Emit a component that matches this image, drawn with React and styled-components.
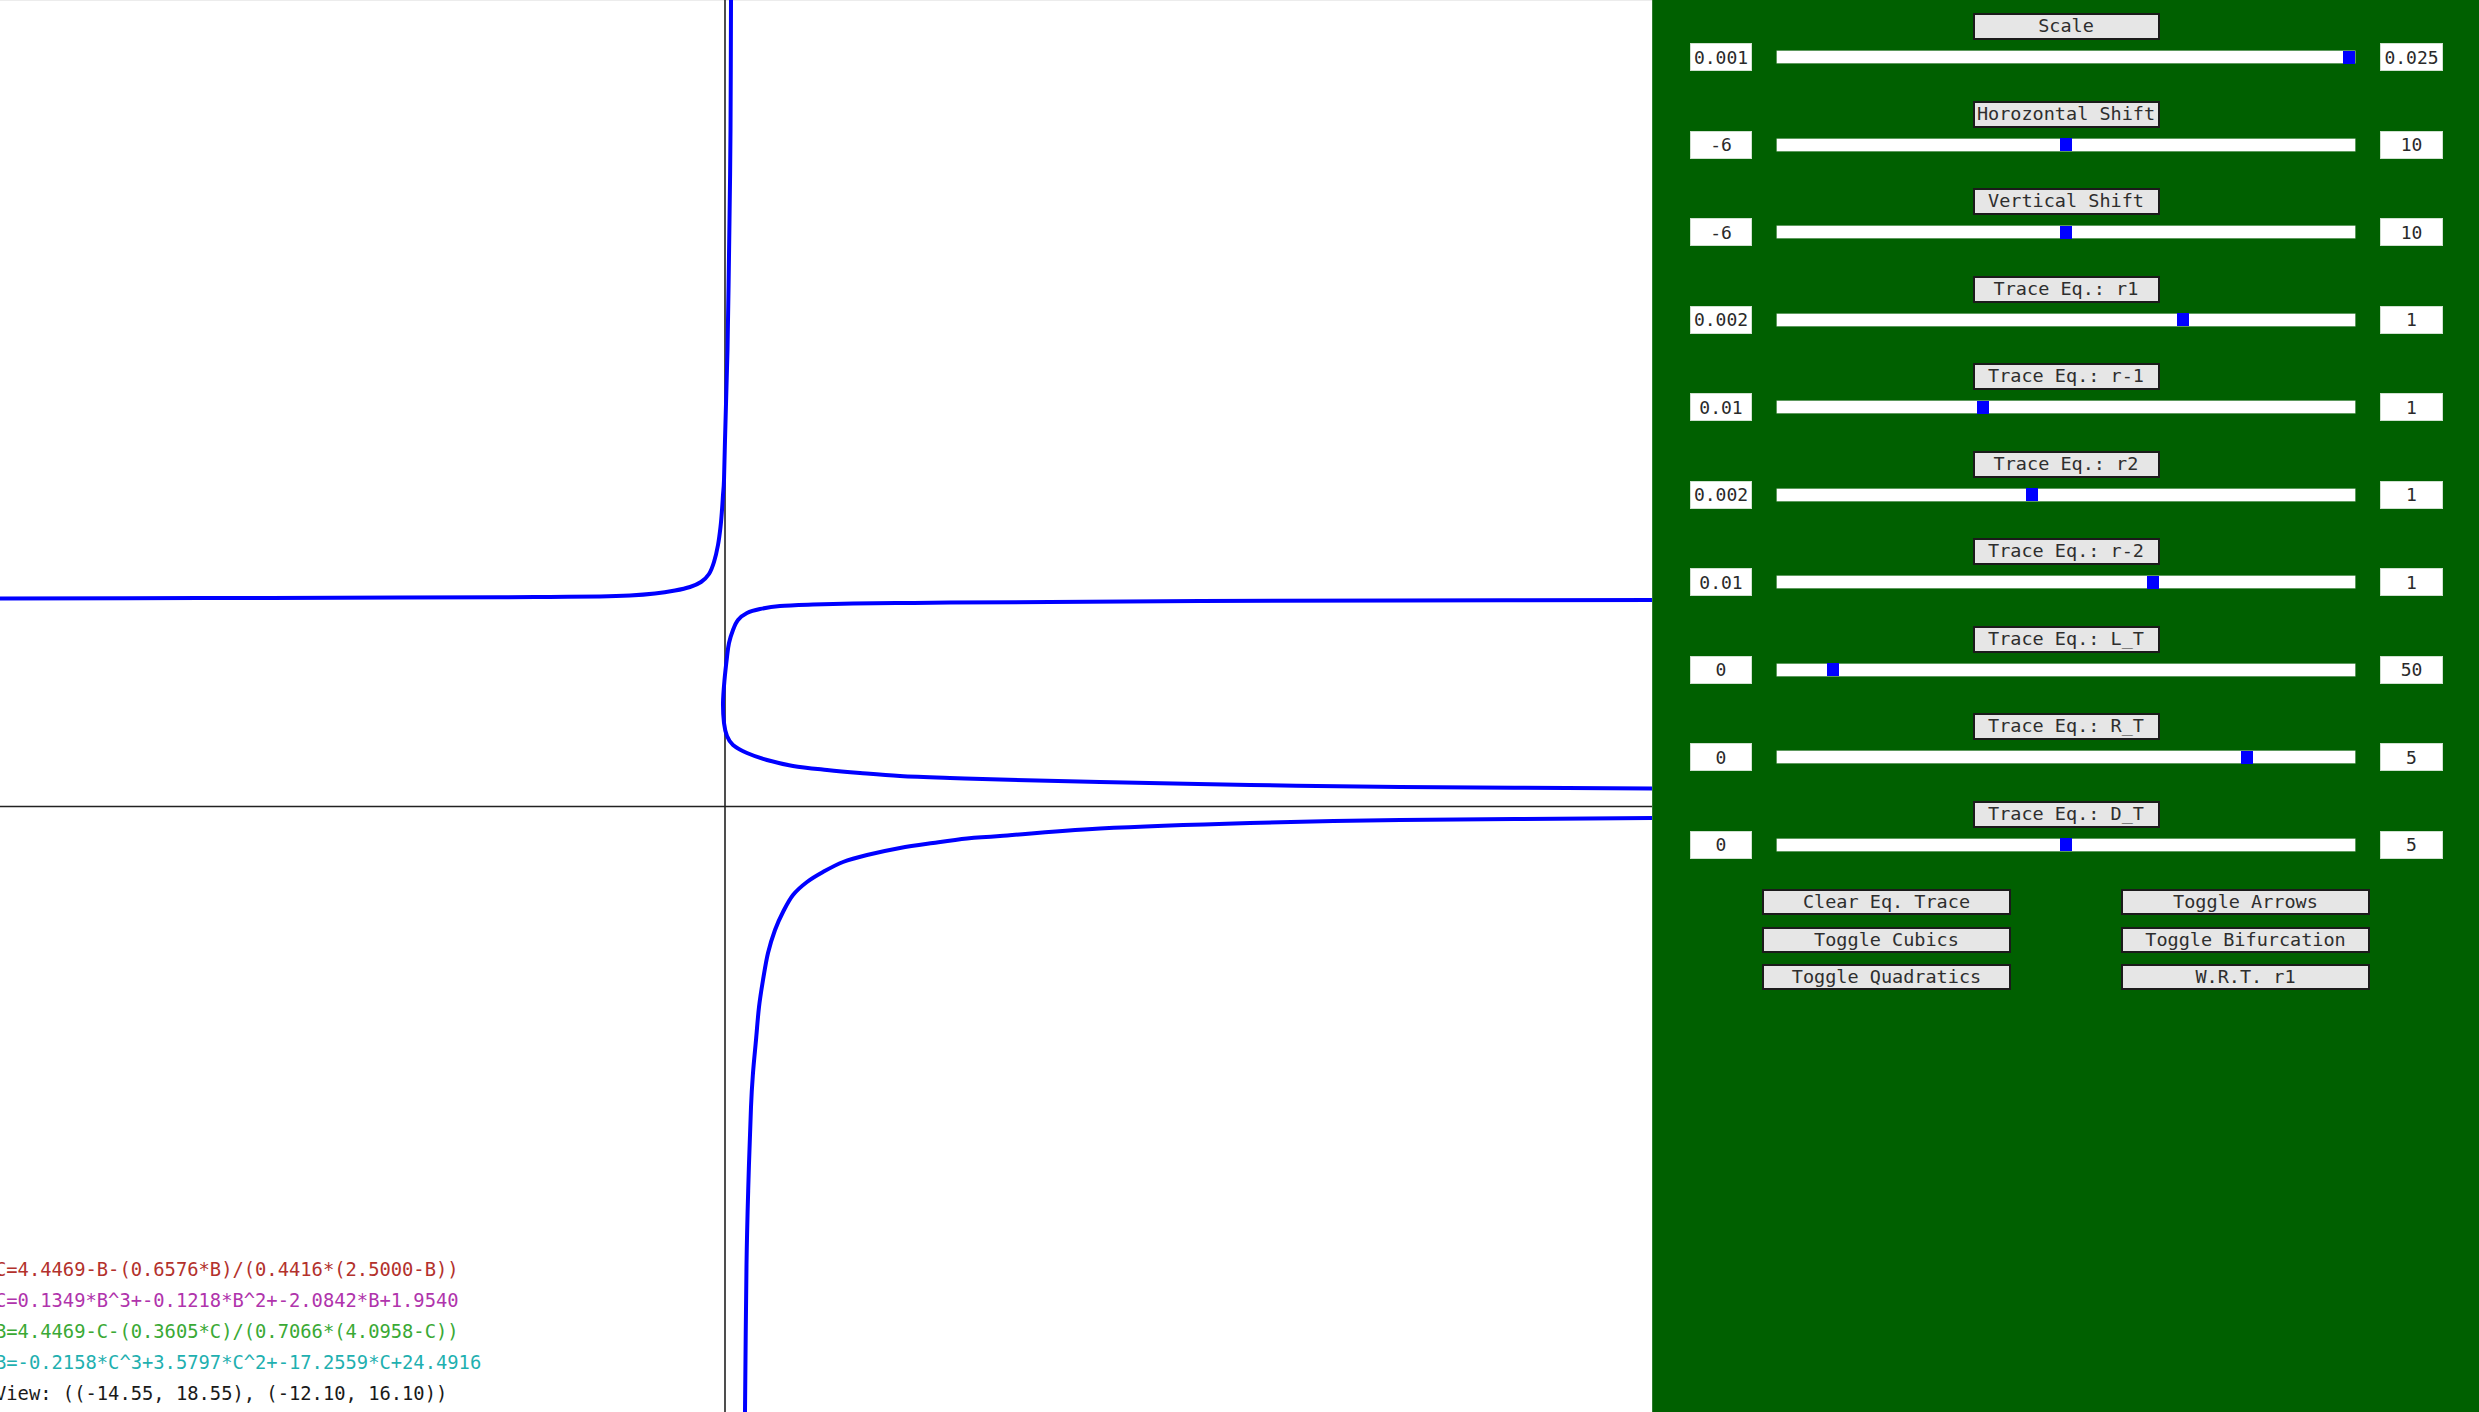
import React from 'react'
import styled, { createGlobalStyle } from 'styled-components'

const GlobalStyle = createGlobalStyle`
  html, body {
    margin: 0;
    padding: 0;
    overflow: hidden;
    background: #fff;
  }
`

const Page = styled.div`
  display: flex;
  width: 100vw;
  height: 100vh;
  overflow: hidden;
  font-family: "DejaVu Sans Mono", "Liberation Mono", monospace;
`

const Graph = styled.div`
  position: relative;
  flex: 0 0 1652px;
  height: 100%;
  background: #fff;
  overflow: hidden;
`

const Plot = styled.svg`
  display: block;
  width: 1652px;
  height: 1412px;
`

const Legend = styled.div`
  position: absolute;
  left: -5px;
  bottom: 3px;
  font-size: 18.8px;
  line-height: 31px;
  white-space: nowrap;
`

const LegendLine = styled.div`
  color: ${p => p.$color};
`

const Panel = styled.div`
  flex: 1;
  display: flex;
  flex-direction: column;
  padding-top: 13px;
  background: #006000;
  border-left: 1px solid #2d7a2d;
  box-sizing: border-box;
`

const SliderGroup = styled.div`
  display: flex;
  flex-direction: column;
  align-items: center;
  gap: 3px;
  margin-bottom: 29.5px;
`

const Label = styled.div`
  width: 187px;
  height: 27px;
  box-sizing: border-box;
  border: 2px solid #1b1b1b;
  background: #e6e6e6;
  color: #2e2e2e;
  font-size: 18.5px;
  line-height: 20px;
  padding-bottom: 1px;
  display: flex;
  align-items: center;
  justify-content: center;
  white-space: nowrap;
`

const SliderRow = styled.div`
  align-self: stretch;
  display: grid;
  grid-template-columns: 62px 1fr 63px;
  column-gap: 25px;
  align-items: center;
  padding: 0 36px 0 37px;
  height: 28px;
`

const ValueBox = styled.div`
  height: 28px;
  box-sizing: border-box;
  background: #fff;
  border: 1px solid #cfe0cf;
  color: #2a2a2a;
  font-size: 18px;
  display: flex;
  align-items: center;
  justify-content: center;
`

const Track = styled.div`
  position: relative;
  height: 12px;
  background: #fff;
  box-shadow: 0 0 0 0.5px #b9d4b9;
`

const Thumb = styled.div`
  position: absolute;
  top: -0.5px;
  width: 12px;
  height: 13px;
  background: #0000ff;
`

const ActionGrid = styled.div`
  display: grid;
  grid-template-columns: repeat(2, 249px);
  column-gap: 110px;
  row-gap: 11.5px;
  justify-content: center;
  margin-top: 1px;
`

const ActionButton = styled.div`
  height: 26px;
  box-sizing: border-box;
  border: 2px solid #1b1b1b;
  background: #e6e6e6;
  color: #2e2e2e;
  font-size: 18.5px;
  line-height: 20px;
  display: flex;
  align-items: center;
  justify-content: center;
  white-space: nowrap;
`

const sliders = [
  { label: 'Scale', min: '0.001', max: '0.025', t: 1 },
  { label: 'Horozontal Shift', min: '-6', max: '10', t: 0.5 },
  { label: 'Vertical Shift', min: '-6', max: '10', t: 0.5 },
  { label: 'Trace Eq.: r1', min: '0.002', max: '1', t: 0.706 },
  { label: 'Trace Eq.: r-1', min: '0.01', max: '1', t: 0.354 },
  { label: 'Trace Eq.: r2', min: '0.002', max: '1', t: 0.4405 },
  { label: 'Trace Eq.: r-2', min: '0.01', max: '1', t: 0.654 },
  { label: 'Trace Eq.: L_T', min: '0', max: '50', t: 0.0889 },
  { label: 'Trace Eq.: R_T', min: '0', max: '5', t: 0.819 },
  { label: 'Trace Eq.: D_T', min: '0', max: '5', t: 0.5 },
]

const actions = [
  'Clear Eq. Trace', 'Toggle Arrows',
  'Toggle Cubics', 'Toggle Bifurcation',
  'Toggle Quadratics', 'W.R.T. r1',
]

const legend = [
  { text: 'C=4.4469-B-(0.6576*B)/(0.4416*(2.5000-B))', color: '#b3312c' },
  { text: 'C=0.1349*B^3+-0.1218*B^2+-2.0842*B+1.9540', color: '#b034ac' },
  { text: 'B=4.4469-C-(0.3605*C)/(0.7066*(4.0958-C))', color: '#3aa935' },
  { text: 'B=-0.2158*C^3+3.5797*C^2+-17.2559*C+24.4916', color: '#1fb0b0' },
  { text: 'View: ((-14.55, 18.55), (-12.10, 16.10))', color: '#1a1a1a' },
]

// traced equilibrium branches, in canvas pixels
const branchA = [
  [731, 0], [730.5, 130], [729.5, 220], [727.5, 350], [725, 440], [724, 480],
  [723, 495], [722, 510], [720.5, 527], [718, 545], [714, 562], [709, 574],
  [701, 582], [690, 587], [675, 590.5], [655, 593.5], [630, 595.5],
  [600, 596.5], [550, 596.9], [500, 597.2], [400, 597.6], [200, 598.1],
  [0, 598.5],
]

const branchB = [
  [1652, 600], [1400, 600.5], [1200, 601], [1050, 602], [950, 602.6],
  [900, 603], [853, 603.5], [813, 604.5], [780, 606], [760, 609], [747, 613],
  [738, 620], [733, 630], [729, 643], [727, 657], [724.5, 680], [723, 703],
  [724, 723], [727, 736], [733, 745], [747, 753], [767, 760], [793, 766],
  [827, 770], [860, 773], [900, 776], [950, 778], [1000, 779.5],
  [1100, 782], [1250, 785], [1400, 787], [1652, 788.5],
]

const branchC = [
  [1652, 818], [1400, 820], [1250, 823], [1100, 828.5], [1000, 836],
  [967, 838.5], [933, 843], [900, 848], [867, 855], [843, 862], [823, 872],
  [807, 882], [793, 895], [783, 912], [775, 930], [768, 953], [763, 980],
  [759, 1007], [756, 1040], [753, 1073], [751, 1107], [748.5, 1180],
  [746.5, 1265], [745, 1412],
]

const smooth = pts => {
  let d = `M${pts[0][0]},${pts[0][1]}`
  for (let i = 0; i < pts.length - 1; i++) {
    const p0 = pts[i - 1] || pts[i]
    const p1 = pts[i]
    const p2 = pts[i + 1]
    const p3 = pts[i + 2] || p2
    const c1x = p1[0] + (p2[0] - p0[0]) / 6
    const c1y = p1[1] + (p2[1] - p0[1]) / 6
    const c2x = p2[0] - (p3[0] - p1[0]) / 6
    const c2y = p2[1] - (p3[1] - p1[1]) / 6
    d += ` C${c1x.toFixed(2)},${c1y.toFixed(2)} ${c2x.toFixed(2)},${c2y.toFixed(2)} ${p2[0]},${p2[1]}`
  }
  return d
}

const Slider = ({ item }) => (
  <SliderGroup>
    <Label>{item.label}</Label>
    <SliderRow>
      <ValueBox>{item.min}</ValueBox>
      <Track>
        <Thumb style={{ left: `calc((100% - 12px) * ${item.t})` }} />
      </Track>
      <ValueBox>{item.max}</ValueBox>
    </SliderRow>
  </SliderGroup>
)

const App = () => {
  return (
    <Page>
      <GlobalStyle />
      <Graph>
        <Plot viewBox="0 0 1652 1412">
          <line x1="0" y1="0.5" x2="1652" y2="0.5" stroke="#ececec" strokeWidth="1" />
          <line x1="725" y1="0" x2="725" y2="1412" stroke="#222" strokeWidth="1.6" />
          <line x1="0" y1="806.5" x2="1652" y2="806.5" stroke="#222" strokeWidth="1.6" />
          {[branchA, branchB, branchC].map((b, i) => (
            <path key={i} d={smooth(b)} fill="none" stroke="#0000ff" strokeWidth="4" strokeLinejoin="round" />
          ))}
        </Plot>
        <Legend>
          {legend.map(l => (
            <LegendLine key={l.text} $color={l.color}>{l.text}</LegendLine>
          ))}
        </Legend>
      </Graph>
      <Panel>
        {sliders.map(s => (
          <Slider key={s.label} item={s} />
        ))}
        <ActionGrid>
          {actions.map(a => (
            <ActionButton key={a}>{a}</ActionButton>
          ))}
        </ActionGrid>
      </Panel>
    </Page>
  )
}

export default App
